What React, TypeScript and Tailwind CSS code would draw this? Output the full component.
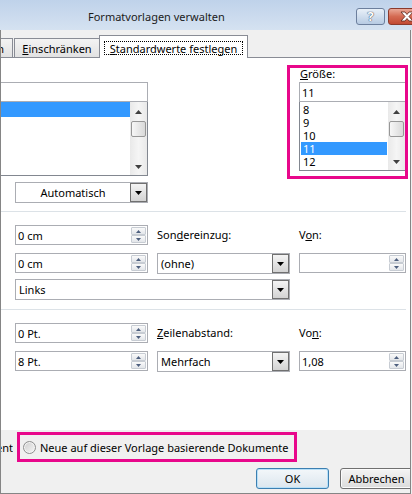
import React from "react";

type TriProps = { up?: boolean; w?: number; h?: number; color?: string };

const Tri = ({ up = false, w = 7, h = 4, color = "#000" }: TriProps) => (
  <svg width={w} height={h} viewBox={`0 0 ${w} ${h}`} className="block">
    <polygon
      points={up ? `0,${h} ${w},${h} ${w / 2},0` : `0,0 ${w},0 ${w / 2},${h}`}
      fill={color}
    />
  </svg>
);

const SpinHalf = ({ up }: { up?: boolean }) => (
  <div className="h-[8px] flex items-center justify-center border border-[#c7ccd3] rounded-[1px] bg-linear-to-b from-[#fafafa] to-[#e3e6ea]">
    <Tri up={up} w={5} h={3} color="#4d5f7e" />
  </div>
);

const Spin = ({ value = "", className = "" }: { value?: string; className?: string }) => (
  <div className={`h-[20px] shrink-0 flex border border-[#abadb3] bg-white ${className}`}>
    <div className="flex-1 flex items-center pl-[2px] whitespace-nowrap">{value}</div>
    <div className="w-[16px] flex flex-col py-[1px] pr-[1px]">
      <SpinHalf up />
      <SpinHalf />
    </div>
  </div>
);

const Drop = ({
  value,
  center = false,
  className = "",
}: {
  value: string;
  center?: boolean;
  className?: string;
}) => (
  <div className={`h-[21px] shrink-0 flex border border-[#abadb3] bg-white ${className}`}>
    <div
      className={`flex-1 flex items-center whitespace-nowrap ${
        center ? "justify-center" : "pl-[3px]"
      }`}
    >
      {value}
    </div>
    <div className="w-[17px] border border-[#707070] bg-linear-to-b from-[#f4f4f4] to-[#d3d3d3] flex items-center justify-center">
      <Tri />
    </div>
  </div>
);

const Label = ({ children, className = "" }: { children: React.ReactNode; className?: string }) => (
  <div className={`h-[20px] shrink-0 flex items-center pb-[2px] whitespace-nowrap ${className}`}>
    {children}
  </div>
);

const ScrollBar = () => (
  <div className="w-[17px] shrink-0 flex flex-col items-center bg-linear-to-r from-[#e9e9e9] via-[#f5f5f5] to-[#e9e9e9]">
    <div className="h-[17px] w-full flex items-center justify-center pt-[2px]">
      <Tri up color="#404040" />
    </div>
    <div className="mt-[2px] w-[15px] h-[16px] rounded-[2px] border border-[#979797] bg-linear-to-r from-[#f7f7f7] to-[#d9d9d9]" />
    <div className="flex-1" />
    <div className="h-[17px] w-full flex items-center justify-center">
      <Tri color="#404040" />
    </div>
  </div>
);

const Separator = () => <div className="h-px shrink-0 bg-[#dce2e7] mr-[4px]" />;

export default function App() {
  const sizes = ["8", "9", "10", "11", "12"];

  return (
    <div className="w-[412px] h-[494px] overflow-hidden flex flex-col bg-[#f0f0f0] text-[11px] leading-none text-black font-['Noto_Sans',sans-serif]">
      {/* title bar */}
      <div className="h-[30px] shrink-0 flex items-start bg-linear-to-b from-[#bfd2ea] to-[#d5e2f1]">
        <div className="h-[30px] pl-[88px] pt-[3px] flex items-center whitespace-nowrap text-[#1b1b1b]">
          Formatvorlagen verwalten
        </div>
        <div className="ml-auto mr-[-20px] mt-[8px] flex gap-[3px]">
          <div className="w-[29px] h-[17px] rounded-[3px] border border-[#6c7f9d] bg-linear-to-b from-[#e9f0f8] to-[#b7cbe3] flex items-center justify-center text-[13px] font-bold text-white [text-shadow:0_0_1px_#2b3a52,0_0_1px_#2b3a52]">
            ?
          </div>
          <div className="w-[44px] h-[17px] rounded-[3px] border border-[#8b3a2c] bg-linear-to-b from-[#e9a897] via-[#d46a52] to-[#c24a33] flex items-center pl-[11px]">
            <svg width="14" height="11" viewBox="0 0 14 11">
              <path
                d="M1 1h4l2 2.5L9 1h4L9 5.5l4 4.5H9L7 7.5 5 10H1l4-4.5z"
                fill="#fff"
                stroke="#5a2218"
                strokeWidth="0.8"
                strokeLinejoin="round"
              />
            </svg>
          </div>
        </div>
      </div>

      {/* client area */}
      <div className="flex-1 min-h-0 flex flex-col overflow-hidden border-l border-r border-b border-[#858585] mr-[1px]">
        {/* tabs */}
        <div className="h-[27px] shrink-0 flex items-end">
          <div className="w-[12px] h-[19px] shrink-0 overflow-hidden flex justify-end items-center pr-[8px] border-t border-r border-[#898c95] bg-linear-to-b from-[#f3f3f3] to-[#e2e2e2]">
            <span className="whitespace-nowrap">Empfehlen</span>
          </div>
          <div className="ml-px w-[85px] h-[19px] shrink-0 flex items-center justify-center border-t border-l border-[#898c95] bg-linear-to-b from-[#f3f3f3] to-[#e2e2e2] whitespace-nowrap">
            <span>
              <u>E</u>inschränken
            </span>
          </div>
          <div className="relative z-10 -mb-px w-[149px] h-[23px] shrink-0 bg-white border-t border-l border-r border-[#898c95] pt-[5px] px-[4px]">
            <div className="h-[14px] flex items-center justify-center border border-dotted border-black whitespace-nowrap">
              <span>
                <u>S</u>tandardwerte festlegen
              </span>
            </div>
          </div>
        </div>

        {/* tab panel */}
        <div className="h-[373px] shrink-0 bg-white border-t border-[#898c95] flex flex-col">
          {/* font section */}
          <div className="h-[153px] shrink-0 flex items-start">
            <div className="w-[147px] shrink-0 pt-[24px] flex flex-col">
              <div className="h-[20px] border border-l-0 border-[#abadb3]" />
              <div className="h-[74px] flex border border-l-0 border-t-0 border-[#828790]">
                <div className="flex-1">
                  <div className="h-[15px] bg-[#3399ff]" />
                </div>
                <ScrollBar />
              </div>
              <Drop value="Automatisch" center className="mt-[6px] ml-[14px] w-[133px] h-[20px]" />
            </div>

            <div className="ml-[139px] mt-[7px] w-[121px] h-[114px] shrink-0 border-[3px] border-[#e8078b] overflow-hidden flex flex-col">
              <div className="h-[12px] leading-[12px] pl-[10px] whitespace-nowrap">
                <u>G</u>röße:
              </div>
              <div className="mt-[2px] ml-[9px] h-[20px] shrink-0 border border-r-0 border-[#abadb3] flex items-center pl-[2px]">
                11
              </div>
              <div className="ml-[9px] h-[69px] shrink-0 border border-r-0 border-t-0 border-[#828790] flex">
                <div className="flex-1 pt-[1px] px-[1px]">
                  {sizes.map((n) => (
                    <div
                      key={n}
                      className={`h-[13px] leading-[13px] overflow-hidden pl-[2px] ${
                        n === "11" ? "bg-[#3399ff] text-white" : ""
                      }`}
                    >
                      {n}
                    </div>
                  ))}
                </div>
                <ScrollBar />
              </div>
            </div>
          </div>

          <Separator />

          {/* indent section */}
          <div className="h-[97px] shrink-0 pt-[13px] pl-[14px] flex flex-col">
            <div className="flex gap-[9px]">
              <Spin value="0 cm" className="w-[133px]" />
              <Label className="w-[133px]">
                <span>
                  Son<u>d</u>ereinzug:
                </span>
              </Label>
              <Label>
                <span>
                  V<u>o</u>n:
                </span>
              </Label>
            </div>
            <div className="mt-[8px] flex gap-[9px]">
              <Spin value="0 cm" className="w-[133px]" />
              <Drop value="(ohne)" className="w-[133px]" />
              <Spin className="w-[107px]" />
            </div>
            <div className="mt-[5px] flex">
              <Drop value="Links" className="w-[275px]" />
            </div>
          </div>

          <Separator />

          {/* spacing section */}
          <div className="pt-[13px] pl-[14px] flex flex-col">
            <div className="flex gap-[9px]">
              <Spin value="0 Pt." className="w-[133px]" />
              <Label className="w-[133px]">
                <span>
                  <u>Z</u>eilenabstand:
                </span>
              </Label>
              <Label>
                <span>
                  Vo<u>n</u>:
                </span>
              </Label>
            </div>
            <div className="mt-[8px] flex gap-[9px]">
              <Spin value="8 Pt." className="w-[133px]" />
              <Drop value="Mehrfach" className="w-[133px]" />
              <Spin value="1,08" className="w-[107px]" />
            </div>
          </div>
        </div>

        {/* bottom */}
        <div className="flex-1 flex flex-col">
          <div className="mt-[2px] flex items-center">
            <div className="w-[12px] shrink-0 overflow-hidden flex justify-end">
              <span className="whitespace-nowrap">Nur in diesem Dokument</span>
            </div>
            <div className="ml-[4px] w-[280px] h-[30px] shrink-0 border-[3px] border-[#e8078b] flex items-center pl-[3px]">
              <div className="w-[13px] h-[13px] shrink-0 rounded-full border border-[#8e8f8f] bg-linear-to-br from-[#cdcdcd] to-[#f7f7f7] shadow-[inset_0_0_0_1px_#f4f4f4]" />
              <span className="ml-[4px] whitespace-nowrap">
                Neue auf dieser Vorlage basierende Dokumente
              </span>
            </div>
          </div>
          <div className="mt-[6px] pl-[255px] flex gap-[11px]">
            <button className="w-[73px] h-[21px] shrink-0 p-0 rounded-[3px] border border-[#3c7fb1] bg-linear-to-b from-[#f3f7fa] to-[#dce6ee] shadow-[inset_0_0_0_1px_#b8e0f8]">
              OK
            </button>
            <button className="w-[73px] h-[21px] shrink-0 p-0 rounded-[3px] border border-[#707070] bg-linear-to-b from-[#f4f4f4] to-[#dcdcdc] shadow-[inset_0_0_0_1px_#fbfbfb]">
              Abbrechen
            </button>
          </div>
        </div>
      </div>
    </div>
  );
}
